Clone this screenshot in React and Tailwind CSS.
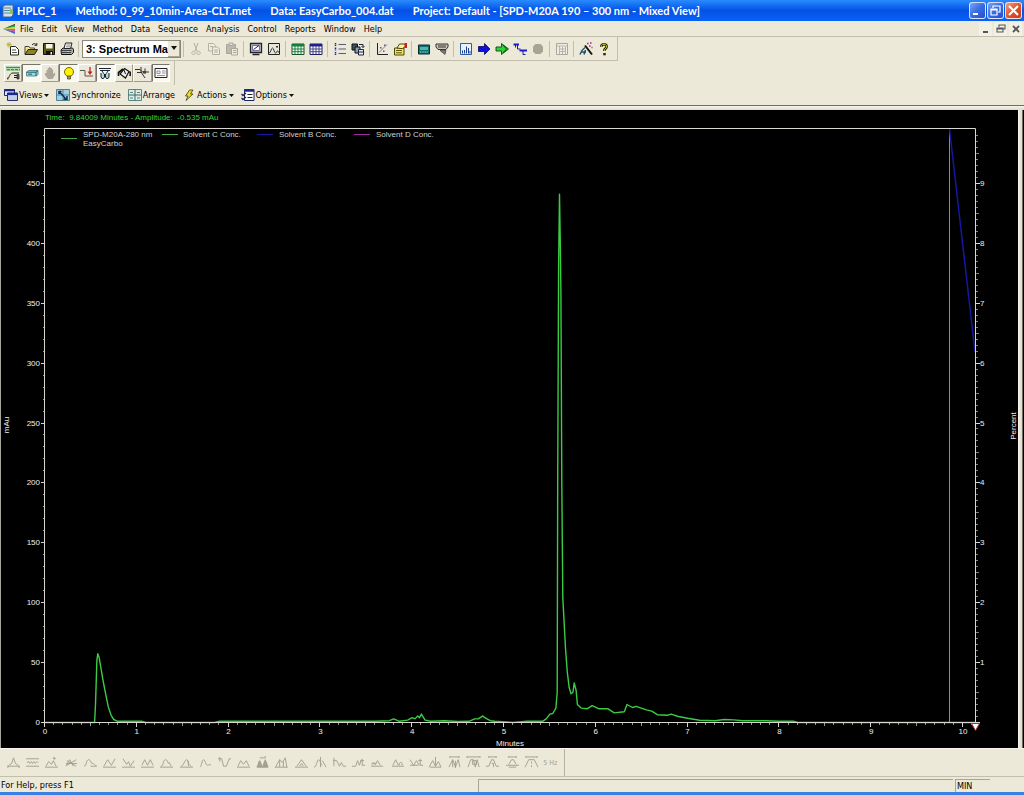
import React, { useState } from "react";

const MENUS = ["File", "Edit", "View", "Method", "Data", "Sequence", "Analysis", "Control", "Reports", "Window", "Help"];

// ---------- icons (14x14 grid) ----------
const ICONS = {
  new: (
    <>
      <path d="M4.500 4.500h5l3 3v5.500h-8z" fill="#fffff4" stroke="#222" />
      <path d="M6 8h4M6 10.500h5" stroke="#555" />
      <path d="M3 0v5.500M.3 2.700h5.500M1 .8l4 3.800M5 .8 1 4.600" stroke="#b4ac28" strokeWidth=".8" />
    </>
  ),
  open: (
    <>
      <path d="M1 12V4.500h4L6 6h4.500v1.500" fill="#f3ee7a" stroke="#444" />
      <path d="M1 12.500 4 7.500h9.500l-3 5z" fill="#8b8420" stroke="#222" />
      <path d="M8 3c1.500-1.800 3-1.800 4.500 0M12.800 1v2.300h-2.300" fill="none" stroke="#222" />
    </>
  ),
  save: (
    <>
      <path d="M1.500 1.500h11v11h-11z" fill="#5a5a12" stroke="#111" />
      <path d="M4 2h6.500v4.500H4z" fill="#f5f5f0" />
      <path d="M4 9h7v4H4z" fill="#111" />
      <path d="M8.500 10h1.500v2.500H8.500z" fill="#eee" />
    </>
  ),
  print: (
    <>
      <path d="M1 8 3 6h9.500l1 1.500v3l-2 2H1.500z" fill="#aaa" stroke="#111" />
      <path d="M4 6.500 5.500 1h6.500l-1.500 5.500z" fill="#fff" stroke="#222" />
      <path d="M6.500 3h4M6 4.800h4" stroke="#555" strokeWidth=".7" />
      <path d="M1.500 8.500h10M2 10.500h9" stroke="#222" strokeWidth=".8" />
      <path d="M7 9.500h2" stroke="#e8d820" />
    </>
  ),
  cut: <path d="M5 1l3 8M9 1 6 9M4.500 9.200a1.700 1.700 0 1 0 .1 0M9.500 9.200a1.700 1.700 0 1 0 .1 0" fill="none" stroke="#b3b0a3" />,
  copy: (
    <>
      <path d="M1.500 1.500h5l2 2v5.500h-7z" fill="#eeecdf" stroke="#b3b0a3" />
      <path d="M5.500 5h5l2 2v5.500h-7zM3 4.500h3M7 8h4M7 10h4" fill="#eeecdf" stroke="#b3b0a3" />
    </>
  ),
  paste: (
    <>
      <path d="M1.500 2.500h9v9h-9z" fill="#bcb9ac" stroke="#aaa79a" />
      <path d="M4 1h4v2.500H4z" fill="#ddd" stroke="#aaa79a" />
      <path d="M6.500 6.500h6v6.500h-6zM8 8.500h3.500M8 10.500h3.500" fill="#eeecdf" stroke="#aaa79a" />
    </>
  ),
  monitor: (
    <>
      <path d="M1.500 1.500h11v9h-11z" fill="#c9c8dd" stroke="#222" strokeWidth="1.300" />
      <path d="M3.500 3.500h7v5h-7z" fill="#fff" stroke="#558" strokeWidth=".8" />
      <path d="M4.500 7.500 10 3.500" stroke="#225" />
      <path d="M3.500 12.500h7" stroke="#222" strokeWidth="1.500" />
    </>
  ),
  picture: (
    <>
      <path d="M1.500 1.500h11v11h-11z" fill="#e6e6da" stroke="#222" />
      <path d="M2 11c2 0 2-5 3.500-5S7 11 8.500 11 9.500 9 10.500 9s1 2 2 2" fill="none" stroke="#333" />
      <path d="M9 4h2v1.500H9z" fill="#333" />
    </>
  ),
  gridGreen: (
    <>
      <path d="M1 2h12v10.500H1z" fill="#fff" stroke="#174f27" />
      <path d="M1 2h12v2.500H1z" fill="#15803d" />
      <path d="M1 7h12M1 9.700h12M4 4v8M7 4v8M10 4v8" stroke="#15803d" />
    </>
  ),
  gridBlue: (
    <>
      <path d="M1 2h12v10.500H1z" fill="#fff" stroke="#1c1c60" />
      <path d="M1 2h12v2.500H1z" fill="#20208c" />
      <path d="M1 7h12M1 9.700h12M4 4v8M7 4v8M10 4v8" stroke="#444488" />
    </>
  ),
  list: (
    <>
      <path d="M5.500 2.500H13M5.500 7H13M5.500 11.500H13" stroke="#555a78" />
      <path d="M2.500 1v3M2.500 5.500v3M2.500 10v3" stroke="#20209c" strokeWidth="1.500" strokeDasharray="1.500 .6" />
    </>
  ),
  batch: (
    <>
      <path d="M1 2h5.500v6H1z" fill="#3b5366" stroke="#111" />
      <path d="M4 5h5v6H4z" fill="#87a2ae" stroke="#111" />
      <path d="M7.500 7.500h5v5.500h-5z" fill="#e8eef0" stroke="#224" />
      <path d="M8 2.500h4v3M10.500 4l1.500 1.500L13.500 4M8 10h4" fill="none" stroke="#223" />
    </>
  ),
  scatter: (
    <>
      <path d="M2.500 1v11.500H13" fill="none" stroke="#222" />
      <path d="m4 10.500 8-8" stroke="#666" strokeWidth=".8" />
      <path d="M5 5h1.500v1.500H5zM8 8.500h1.500V10H8zM9 2.500h1.500V4H9z" fill="#55a" />
    </>
  ),
  props: (
    <>
      <path d="M1.500 6h9.500v7H1.500z" fill="#f7e64a" stroke="#4b4510" />
      <path d="M3 8.500h6M3 10.800h6" stroke="#5d5510" />
      <path d="M4 6 6.500 2h5l1.500 2-3.500 2.500H8z" fill="#fff3a0" stroke="#4b4510" />
      <path d="M11.500 1H14v5h-2.500z" fill="#c8201c" />
    </>
  ),
  device: (
    <>
      <path d="M1.500 3h11v9h-11z" fill="#0e6e72" stroke="#0a2c2e" />
      <path d="M3 5h8v3H3z" fill="#4fb5aa" />
      <path d="M3 10h8" stroke="#a6e6e0" strokeDasharray="1 .7" />
    </>
  ),
  funnel: (
    <>
      <path d="M1 2h12v3l-2 2.500H3L1 5z" fill="#c9c6b8" stroke="#333" />
      <path d="M4 3v3M6 3v3M8 3v3M10 3v3" stroke="#333" />
      <path d="M5 8.500h6l-1 4z" fill="#777" stroke="#444" strokeWidth=".7" />
    </>
  ),
  bars: (
    <>
      <path d="M1.500 1.500h11v11h-11z" fill="#e4f2fa" stroke="#2b5f9c" />
      <path d="M3.500 11.500v-3M5.500 11.500V8M7.500 11.500v-7M9.500 11.500V6M11 11.500V9" stroke="#1c3f94" />
    </>
  ),
  arrowBlue: <path d="M1.500 4.500h6V1.500L13 7l-5.500 5.500v-3h-6z" fill="#1010d8" stroke="#050560" strokeWidth=".8" />,
  arrowGreen: (
    <>
      <path d="M1 5h5.500V1.500L13.500 7l-7 5.500V9H1z" fill="#2ed33a" stroke="#084a10" strokeWidth=".9" />
      <path d="m8 3 3.500 4L8 11" fill="none" stroke="#084a10" />
    </>
  ),
  steps: (
    <>
      <path d="M.5 2.500H6M6.500 8.500H14" stroke="#1a1ad0" strokeWidth="1.800" />
      <path d="M2.500 3v2.500M4.500 3v4h3M10 9v3.500h2.500" fill="none" stroke="#1a1a90" />
    </>
  ),
  stop: <path d="M4.500 2h5L12 4.500v5L9.500 12h-5L2 9.500v-5z" fill="#a7a496" />,
  table: (
    <>
      <path d="M1.500 1.500h11v11h-11z" fill="#efeee6" stroke="#aaa79a" />
      <path d="M1.500 4h11M4 7h7M4 9.500h7M4.500 4v8M7.500 5v7M10.500 5v7" stroke="#b8b5a8" />
    </>
  ),
  wizard: (
    <>
      <path d="m6 3.500 7 9" stroke="#111" strokeWidth="2" />
      <path d="M1 12.500c1-3 2-5 5-7M5 12.500 6.500 8M2 10h5" fill="none" stroke="#24506c" strokeWidth="1.500" />
      <path d="M8 1.500h1.500M11 1h1.500M10 4h1.500M12.500 5.500h1" stroke="#b01a90" strokeWidth="1.500" />
    </>
  ),
  help: (
    <>
      <path d="M4.500 5V3.500L5.500 2.500h3L9.500 3.500V5.500L7.500 7.500V9" fill="none" stroke="#2d2a08" strokeWidth="2.600" />
      <path d="M4.500 5V3.500L5.500 2.500h3L9.500 3.500V5.500L7.500 7.500V9" fill="none" stroke="#bdb82a" />
      <path d="M6.200 11h2.600v2.300H6.200z" fill="#2d2a08" />
    </>
  ),
  trace: (
    <>
      <path d="M0 1.500h14M0 3.800h14" stroke="#1fa53a" strokeWidth="1.500" />
      <path d="M0 3.800h14" stroke="#ece9d8" strokeDasharray="1 3" />
      <path d="M1 13c3-1 2-6 6-6h6M8 9.500h3M8 11.500h3" fill="none" stroke="#222" />
      <path d="M2 11v2.500M11 8.500h2V13h-2z" fill="#555" stroke="#333" strokeWidth=".8" />
    </>
  ),
  module: (
    <>
      <path d="M1.500 6 3.500 4.500H13v4L11 10H1.500z" fill="#8adfe8" stroke="#3d7880" strokeWidth=".8" />
      <path d="M1.500 6.200H11V10M11 6.200l2-1.600M3 8.200h4" fill="none" stroke="#153a40" strokeWidth=".8" />
    </>
  ),
  hand: <path d="M3.500 7V4h1.200V2h1.300V1h1.500v1h1.400v1.500h1.200V8l2-1.500V9L9.500 13H5L2 9V7z" fill="#aaa79a" />,
  bulb: (
    <>
      <circle cx="7" cy="6" r="4.500" fill="#fff200" stroke="#776a00" />
      <path d="M5.500 10h3v3h-3z" fill="#a8a020" stroke="#444" strokeWidth=".8" />
    </>
  ),
  zero: (
    <>
      <path d="M0 4.500h5V10h8" fill="none" stroke="#555" />
      <path d="M10 1v6" stroke="#c81e1e" strokeWidth="1.300" />
      <path d="M7.500 5.500h5L10 9z" fill="#c81e1e" />
    </>
  ),
  lamps: (
    <>
      <path d="M1 2.500h12M2 4.500h10" stroke="#123" />
      <path d="M4 5 6 8M10 5 8 8" stroke="#222" />
      <path d="M3 7v4l1 1.500h1.500L6.500 11V8M7.500 8v3l1 1.500H10l1-1.500V7" fill="#b8d4d4" stroke="#123" />
    </>
  ),
  bucket: (
    <>
      <path d="m3 8 4.500-5.500L12 5.500 8.500 12z" fill="#eee" stroke="#111" strokeWidth="1.200" />
      <path d="M1.500 10V6.500L6 3M12.500 5.500c1.200 1.500 1 3 .3 4.500" fill="none" stroke="#111" strokeWidth="1.600" />
      <path d="m7 4 1.500 4" stroke="#111" />
    </>
  ),
  valve: (
    <>
      <path d="M0 3.500h5l2.500 2.500H14M6 1v5l4 6M10 2.500v5M2 6.500h5" fill="none" stroke="#333" />
      <path d="M8 5h3v2.500H8z" fill="#444" />
    </>
  ),
  panel: (
    <>
      <path d="M1 2.500h12v9H1z" fill="#fafaf2" stroke="#223" />
      <path d="M3 5h3v2.500H3zM8 5h3.500M8 7h3.500M3 9.500h8" fill="none" stroke="#668" strokeWidth=".7" />
    </>
  ),
  views: (
    <>
      <path d="M.5 1.500h10v6H.5z" fill="#dfe7fa" stroke="#222a70" />
      <path d="M.5 2.200h10" stroke="#1a2890" strokeWidth="2.200" />
      <path d="M3.500 5h10v7.500h-10z" fill="#c3cdea" stroke="#222a70" />
      <path d="M3.500 6h10" stroke="#1a2890" strokeWidth="2.200" />
    </>
  ),
  sync: (
    <>
      <path d="M.5 1.500h13v11H.5z" fill="#9ed2e2" stroke="#4f8196" />
      <path d="M7 1.500v11M.5 7h13" stroke="#4f8196" />
      <path d="m3 3.500 7 7.500M3 6V3.500h2.500M7.500 11.300H11V8" fill="none" stroke="#142a54" strokeWidth="1.500" />
    </>
  ),
  arrange: (
    <>
      <path d="M.5 1.500h13v11H.5z" fill="#dce9e4" stroke="#5b8681" />
      <path d="M7 1.500v11M.5 7h13" stroke="#3f6a66" />
      <path d="M2 4.500h3M9 4.500h3M2 10h3M9 10h3" stroke="#5b8681" />
    </>
  ),
  actions: <path d="M7.500 2H11L8.500 6H11l-7 6.500L6 8H3.500z" fill="#e8dc28" stroke="#3b3a10" strokeWidth=".8" />,
  options: (
    <>
      <path d="M3.500 1.500h9.500v11H3.500z" fill="#fff" stroke="#1c2468" />
      <path d="M3 2.500h10" stroke="#1c2890" strokeWidth="2.500" />
      <path d="M6.500 6.500h5M6.500 9.500h5" stroke="#222" />
      <path d="m.5 6 1.500 1.500L5 5M.5 10 2 11.500 5 9" fill="none" stroke="#1c2468" strokeWidth="1.300" />
    </>
  ),
};

function Icon({ name }) {
  return (
    <svg viewBox="0 0 14 14" className="w-[14px] h-[14px] shrink-0" aria-hidden="true">
      {ICONS[name]}
    </svg>
  );
}

const TOOLBAR_LEFT = ["new", "open", "save", "print"];
const TOOLBAR_RIGHT = [
  ["cut", "copy", "paste"],
  ["monitor", "picture"],
  ["gridGreen", "gridBlue"],
  ["list", "batch"],
  ["scatter", "props"],
  ["device", "funnel"],
  ["bars", "arrowBlue", "arrowGreen", "steps", "stop"],
  ["table"],
  ["wizard", "help"],
];

// [icon, pressed]
const INSTRUMENT = [
  ["trace", false],
  ["module", true],
  ["hand", false],
  ["bulb", true],
  ["zero", false],
  ["lamps", true],
  ["bucket", false],
  ["valve", false],
  ["panel", true],
];

// integration event glyphs
const EVENTS = [
  "M1 11h12M2 10 5 8l2-6 2 6 3 2M1 13v-3M13 13v-3",
  "M0 3h14M0 11h14M1 7l2-1 1 2 2-2 1 2 2-2 1 2 2-2 1 1",
  "M0 12h14M1 11l3-5 3 3 2-4 3 6M10 1v3M8.500 2.500h3",
  "M1 11l4-7 4 7M2 5l10 6M12 4 2 10M1 8h12",
  "M0 11c3 0 2-7 5-7s2 5 4 4 2 3 5 3M7 11h6",
  "M0 12h14M1 11l4-7 4 6 4-7",
  "M0 12h14M1 3l4 6 2-3 2 5 4-6",
  "M0 12h14M1 10l3-6 3 6 3-6 3 6",
  "M0 12h14M1 11c3 0 2-7 5-7s2 6 4 3l2 4",
  "M0 12h14M1 11c3 0 4-7 6-7s1 5 5 7M9 5v6",
  "M1 12c2-1 2-8 4-8s2 6 4 6 2-2 4 0",
  "M0 3h4l2 8h3l3-8h2M2 1v5",
  "M0 12h14M1 11l3-6 3 4 3-4 3 6",
  "M1 12 4 5l3 7 3-8 3 8zM3 12V6M5 12V7M9 12V6M11 12V7M10 2V0M4 2h6",
  "M0 13 5 4l3 3 3-5 2 11M1 12h12M5 4v8M9 6v6",
  "M0 12h14M2 11l5-7 5 7M5 11l2-3 2 3",
  "M0 12c3 0 3-8 5-8s2 6 4 6M7 1v11M9 5l4 7",
  "M1 2v9M0 5h4l3 6 2-4 2 4h3",
  "M0 11h4l2-6 2 5 2-6M11 3v7h3M9 5h4",
  "M0 11h13M2 10c-2-2 0-4 2-2M4 10l3-5 3 5M2 8h4",
  "M1 11h13M2 10l3-6 3 6M9 10c-1-4 4-4 3 0",
  "M0 4l4 6 3-5 3 5M0 10h9M11 3v7h3M9 5h4",
  "M0 12l4-7 3 6 3-5 3 6M7 1v10M1 12h12",
  "M2 1h10M2 0v2M12 0v2M1 12l4-8 3 8 3-8 2 8M5 4v8M8 5v8",
  "M0 1h14M0 0v2M14 0v2M1 12l3-8h3l2 8 2-8 2 8M6 5h4v4H6z",
  "M3 1h8M3 0v2M11 0v2M0 11h3l3-7h2l3 7h3M6 8h2v4",
  "M3 1h8M3 0v2M11 0v2M3 9l3-5h2l3 5M0 10h14M3 12h8",
  "M1 1h12M1 0v2M13 0v2M0 12l4-8h6l4 8M7 6v2M7 10v2",
];

// ---------- chart ----------
const X0 = 45;
const X1 = 975;
const Y0 = 612;
const YTOP = 18;
const xAt = (min) => X0 + min * 91.8;
const yAt = (mau) => Y0 - mau * 1.198;

// [minutes, mAu]
const SIGNAL = [
  [0, 0], [0.54, 0], [0.55, 15], [0.565, 52], [0.575, 57.5], [0.59, 54], [0.61, 45], [0.635, 34], [0.66, 24], [0.69, 13],
  [0.72, 6], [0.75, 2.5], [0.79, 1], [1.05, 1], [1.1, 0], [1.85, 0], [1.9, 1], [3.6, 1], [3.75, 1.5], [3.8, 3],
  [3.86, 1], [3.95, 2], [4.0, 4], [4.03, 3], [4.06, 5.5], [4.08, 4], [4.1, 7], [4.14, 2], [4.2, 1], [4.35, 1.5],
  [4.5, 0.8], [4.62, 1], [4.68, 3], [4.72, 3], [4.77, 5.5], [4.79, 4], [4.85, 1.5], [4.9, 1], [5.1, 0], [5.25, 1],
  [5.42, 1], [5.46, 3], [5.5, 7], [5.53, 7.5], [5.565, 12], [5.58, 25], [5.585, 200], [5.595, 380], [5.605, 441],
  [5.613, 400], [5.62, 360], [5.63, 200], [5.64, 104], [5.655, 84], [5.67, 62], [5.69, 42], [5.71, 29], [5.73, 24],
  [5.75, 25], [5.765, 33], [5.785, 27], [5.8, 15], [5.84, 12], [5.91, 11.5], [5.96, 14], [6.03, 11.5], [6.13, 11.5],
  [6.2, 8], [6.31, 9], [6.34, 15], [6.4, 12.5], [6.44, 13.5], [6.55, 10.5], [6.61, 9.5], [6.67, 6.5], [6.78, 6],
  [6.82, 7], [6.9, 5], [7.0, 3.5], [7.13, 1.8], [7.3, 1.5], [7.4, 2.5], [7.5, 2.2], [7.6, 1.5], [7.85, 1.5], [8.0, 1],
  [8.15, 1], [8.2, 0], [10.13, 0],
];

const LEGEND = [
  { x: 61, textX: 83, y: 28, color: "#3fae46", lines: ["SPD-M20A-280 nm", "EasyCarbo"] },
  { x: 162, textX: 183, y: 24, color: "#3fae46", lines: ["Solvent C Conc."] },
  { x: 257, textX: 279, y: 24, color: "#1616a8", lines: ["Solvent B Conc."] },
  { x: 354, textX: 376, y: 24, color: "#a42aa4", lines: ["Solvent D Conc."] },
];

const range = (n) => Array.from({ length: n }, (_, i) => i);

function Chromatogram() {
  const points = SIGNAL.map(([m, v]) => `${xAt(m).toFixed(1)},${(yAt(v) + 0.5).toFixed(1)}`).join(" ");

  return (
    <svg
      viewBox="0 0 1018 638"
      className="block flex-1 min-w-0 h-auto bg-black text-[8px] font-['Liberation_Sans',Arial,sans-serif]"
      role="img"
      aria-label="Chromatogram"
    >
      <path d="M.5 0v638" stroke="#a8a69c" />
      <text x="45" y="10" fill="#35d63c" className="whitespace-pre">
        {"Time:  9.84009 Minutes - Amplitude:  -0.535 mAu"}
      </text>

      {LEGEND.map((item) => (
        <g key={item.x}>
          <path d={`M${item.x} ${item.y + 0.5}h16`} stroke={item.color} />
          {item.lines.map((line, i) => (
            <text key={line} x={item.textX} y={27 + i * 9} fill="#d0d0d0">
              {line}
            </text>
          ))}
        </g>
      ))}

      <path d={`M949.5 ${YTOP}V${Y0}`} stroke="#8c8c8c" />
      <path d={`M949.5 ${YTOP + 1} 975 242`} stroke="#1616a4" strokeWidth="1.5" fill="none" />
      <polyline points={points} fill="none" stroke="#3ccc44" strokeWidth="1.4" strokeLinejoin="round" />

      {/* frame and ticks */}
      <g stroke="#d8d8d0" fill="none">
        <path d={`M${X0 - 0.5} ${YTOP + 0.5}H${X1 + 0.5}V${Y0 + 0.5}H${X0 - 0.5}z`} />
        {range(50).map((i) => (
          <path
            key={i}
            d={`M${X0} ${Math.round(yAt(i * 10)) + 0.5}h${i % 5 === 0 ? -4 : -2}`}
            strokeOpacity={i % 5 === 0 ? 1 : 0.7}
          />
        ))}
        {range(99).map((i) => (
          <path
            key={i}
            d={`M${X1} ${Math.round(yAt(i * 5)) + 0.5}h${i % 10 === 0 ? 5 : i % 5 === 0 ? 4 : 3}`}
            strokeOpacity={i % 10 === 0 ? 1 : 0.6}
          />
        ))}
        {range(102).map((i) => (
          <path
            key={i}
            d={`M${Math.round(xAt(i / 10)) - 0.5} ${Y0}v${i % 10 === 0 ? 5 : i % 5 === 0 ? 4 : 3}`}
            strokeOpacity={i % 10 === 0 ? 1 : 0.7}
          />
        ))}
      </g>

      {/* axis labels */}
      <g fill="#f0f0f0">
        {range(10).map((i) => (
          <text key={i} x="40" y={yAt(i * 50) + 3} textAnchor="end">
            {i * 50}
          </text>
        ))}
        {range(9).map((i) => (
          <text key={i} x="980" y={yAt((i + 1) * 50) + 3}>
            {i + 1}
          </text>
        ))}
        {range(11).map((i) => (
          <text key={i} x={xAt(i)} y={Y0 + 12} textAnchor="middle">
            {i}
          </text>
        ))}
        <text x="510" y="636" textAnchor="middle">
          Minutes
        </text>
        <text transform="translate(9 315) rotate(-90)" textAnchor="middle">
          mAu
        </text>
        <text transform="translate(1016 316) rotate(-90)" textAnchor="middle">
          Percent
        </text>
      </g>

      <path d="M971.500 613.500h8l-4 7z" fill="#fff" stroke="#b03030" />
    </svg>
  );
}

function Sep() {
  return <span className="w-px h-4 mr-[3px] ml-[2px] bg-[#c2bfae] shrink-0" />;
}

function ToolButton({ name }) {
  return (
    <button type="button" aria-label={name} className="w-[18px] h-[18px] flex items-center justify-center shrink-0">
      <Icon name={name} />
    </button>
  );
}

function ViewButton({ icon, label, menu }) {
  return (
    <button type="button" className="flex items-center gap-px">
      <Icon name={icon} />
      <span>{label}</span>
      {menu && (
        <svg viewBox="0 0 5 3" className="w-[5px] h-[3px] ml-px" aria-hidden="true">
          <path d="M0 0h5L2.500 3z" fill="#111" />
        </svg>
      )}
    </button>
  );
}

const CAPTION_GLYPHS = {
  Minimize: "M4 11h5v2H4z",
  Restore: "M6 6V4h7v6h-2M4 7h6v6H4zM4 8h6",
  Close: "M4 4l9 9M13 4l-9 9",
};

function CaptionButton({ label }) {
  return (
    <button
      type="button"
      aria-label={label}
      className={`w-[17px] h-[17px] rounded-[3px] border border-white/80 ${
        label === "Close"
          ? "bg-gradient-to-br from-[#f09a7c] via-[#e2532f] to-[#c63a18]"
          : "bg-gradient-to-br from-[#7ba2f2] via-[#3a6be2] to-[#2450c8]"
      }`}
    >
      <svg viewBox="1 1 15 15" className="block w-full h-full" aria-hidden="true">
        <path
          d={CAPTION_GLYPHS[label]}
          fill={label === "Minimize" ? "#fff" : "none"}
          stroke={label === "Minimize" ? "none" : "#fff"}
          strokeWidth={label === "Close" ? 2 : 1.2}
        />
      </svg>
    </button>
  );
}

export default function App() {
  const [method, setMethod] = useState("3: Spectrum Ma");

  return (
    <div className="min-h-screen flex flex-col bg-[#ece9d8] text-black text-[9px] leading-[12px] font-['DejaVu_Sans_Condensed','Liberation_Sans',sans-serif]">
      {/* Title bar */}
      <header className="h-[21px] px-[2px] flex items-center bg-gradient-to-b from-[#2a8bff] via-[#0551e4] to-[#0863f8] text-white font-bold text-[11px] leading-[14px] font-['Lato',sans-serif]">
        <svg viewBox="0 0 12 14" className="w-[12px] h-[14px] mr-[3px]" aria-hidden="true">
          <path d="M1 2.500 3 1h8v10l-2 2H1z" fill="#d5e3e6" stroke="#46698c" />
          <path d="M2 4h7M2 6.500h7M2 9h7" stroke="#58879a" />
          <path d="M8 5h3v5H8z" fill="#8bbd6c" />
        </svg>
        <h1 className="flex gap-[19px] whitespace-pre">
          <span>HPLC_1</span>
          <span>Method: 0_99_10min-Area-CLT.met</span>
          <span>Data: EasyCarbo_004.dat</span>
          <span>Project: Default - [SPD-M20A 190 – 300 nm - Mixed View]</span>
        </h1>
        <div className="ml-auto flex gap-px">
          <CaptionButton label="Minimize" />
          <CaptionButton label="Restore" />
          <CaptionButton label="Close" />
        </div>
      </header>

      {/* Menu bar */}
      <nav className="h-4 pl-[3px] pr-[2px] flex items-center border-b border-[#c2bfae]">
        <svg viewBox="0 0 13 12" className="w-[13px] h-[12px] mr-[4px]" aria-hidden="true">
          <path d="M0 6 12 1v3z" fill="#38b54a" />
          <path d="M0 6 12 4v2z" fill="#e0c83c" />
          <path d="M0 6h12v2.500z" fill="#c85aa0" />
          <path d="m0 6 12 2.500V11z" fill="#4868c8" />
          <path d="M0 6 12 1v1z" fill="#333" />
        </svg>
        <ul className="flex gap-2">
          {MENUS.map((menu) => (
            <li key={menu}>
              <button type="button">{menu}</button>
            </li>
          ))}
        </ul>
        <div className="ml-auto flex gap-[2px]">
          {["M4 9h5v2H4z", "M5 5V3h6v4H9M3 6h6v4H3zM3 7h6", "M4 4l6 6M10 4l-6 6"].map((d, i) => (
            <button
              key={d}
              type="button"
              aria-label={["Minimize view", "Restore view", "Close view"][i]}
              className="w-[13px] h-[14px] bg-[#f3f1e6]"
            >
              <svg viewBox="0 0 13 14" className="block" aria-hidden="true">
                <path d={d} fill={i === 0 ? "#555" : "none"} stroke={i === 0 ? "none" : "#555"} strokeWidth={i === 2 ? 1.8 : 1.1} />
              </svg>
            </button>
          ))}
        </div>
      </nav>

      {/* Main toolbar */}
      <div className="flex">
        <div className="h-6 px-1 flex items-center border-r border-b border-[#c2bfae]">
          {TOOLBAR_LEFT.map((name) => (
            <ToolButton key={name} name={name} />
          ))}
          <Sep />
          <div className="relative w-[99px] h-[18px] shrink-0">
            <select
              aria-label="Method"
              value={method}
              onChange={(e) => setMethod(e.target.value)}
              className="appearance-none block w-full h-full pl-[3px] bg-white border border-[#8a887c] font-bold text-[11px] leading-[14px] text-black font-['Liberation_Sans',Arial,sans-serif]"
            >
              <option>3: Spectrum Ma</option>
            </select>
            <span className="absolute right-px top-px w-[12px] h-[16px] flex items-center justify-center bg-[#ece9d8] border-r border-b border-[#a8a598] pointer-events-none">
              <svg viewBox="0 0 6 4" className="w-[6px] h-[4px]" aria-hidden="true">
                <path d="M0 0h6L3 4z" fill="#111" />
              </svg>
            </span>
          </div>
          {TOOLBAR_RIGHT.map((group) => (
            <div key={group[0]} className="flex items-center">
              <Sep />
              {group.map((name) => (
                <ToolButton key={name} name={name} />
              ))}
            </div>
          ))}
        </div>
      </div>

      {/* Instrument toolbar */}
      <div className="flex">
        <div className="h-6 px-1 flex items-center border-r border-[#c2bfae]">
          <div className="grid grid-cols-9 w-[166px]">
            {INSTRUMENT.map(([name, pressed]) => (
              <button
                key={name}
                type="button"
                aria-label={name}
                aria-pressed={pressed}
                className={`h-[18px] flex items-center justify-center border ${
                  pressed
                    ? "bg-[#f8f7f0] border-t-[#77756a] border-l-[#77756a] border-b-white border-r-white"
                    : "border-t-white border-l-white border-b-[#a09d90] border-r-[#a09d90]"
                }`}
              >
                <Icon name={name} />
              </button>
            ))}
          </div>
        </div>
      </div>

      {/* View actions */}
      <div className="h-5 px-1 flex items-center gap-[7px]">
        <ViewButton icon="views" label="Views" menu />
        <ViewButton icon="sync" label="Synchronize" />
        <ViewButton icon="arrange" label="Arrange" />
        <ViewButton icon="actions" label="Actions" menu />
        <ViewButton icon="options" label="Options" menu />
      </div>

      <div className="h-[5px] border-t border-[#716f64] bg-gradient-to-b from-[#f6f4ea] to-[#dedbcb]" />

      {/* Chart with splitter on the right */}
      <main className="flex bg-black">
        <Chromatogram />
        <div className="w-[5px] mr-px bg-gradient-to-r from-[#f8f6ee] to-[#dcd9ca] border-r border-[#716f64]" />
      </main>

      {/* Integration toolbar */}
      <div className="h-[29px] flex items-stretch border-t border-b border-t-[#f8f6ee] border-b-[#c2bfae]">
        <div className="px-1 flex items-center border-r border-[#b5b2a2]">
          <div className="w-[556px] grid grid-cols-[repeat(29,minmax(0,1fr))] items-center">
            {EVENTS.map((d, i) => (
              <button key={d} type="button" aria-label={`Integration event ${i + 1}`} className="flex justify-center">
                <svg viewBox="0 0 14 14" className="w-[13px] h-[13px] overflow-visible" aria-hidden="true">
                  <path d={d} fill={i === 13 ? "#aaa79a" : "none"} stroke="#a19e90" strokeWidth="1" />
                </svg>
              </button>
            ))}
            <button type="button" className="text-[7px] text-[#a19e90] whitespace-nowrap">
              5 Hz
            </button>
          </div>
        </div>
      </div>

      {/* Status bar */}
      <footer className="h-[15px] pl-px pr-[34px] flex items-stretch gap-[2px]">
        <p className="w-[475px] mt-[2px]">For Help, press F1</p>
        <div className="flex-1 mt-[2px] border-t border-l border-[#a8a598]" />
        <p className="w-[35px] mt-[2px] pl-px border-t border-l border-[#a8a598]">MIN</p>
      </footer>
      <div className="flex-1 min-h-[3px] bg-[#3a80e4]" />
    </div>
  );
}
